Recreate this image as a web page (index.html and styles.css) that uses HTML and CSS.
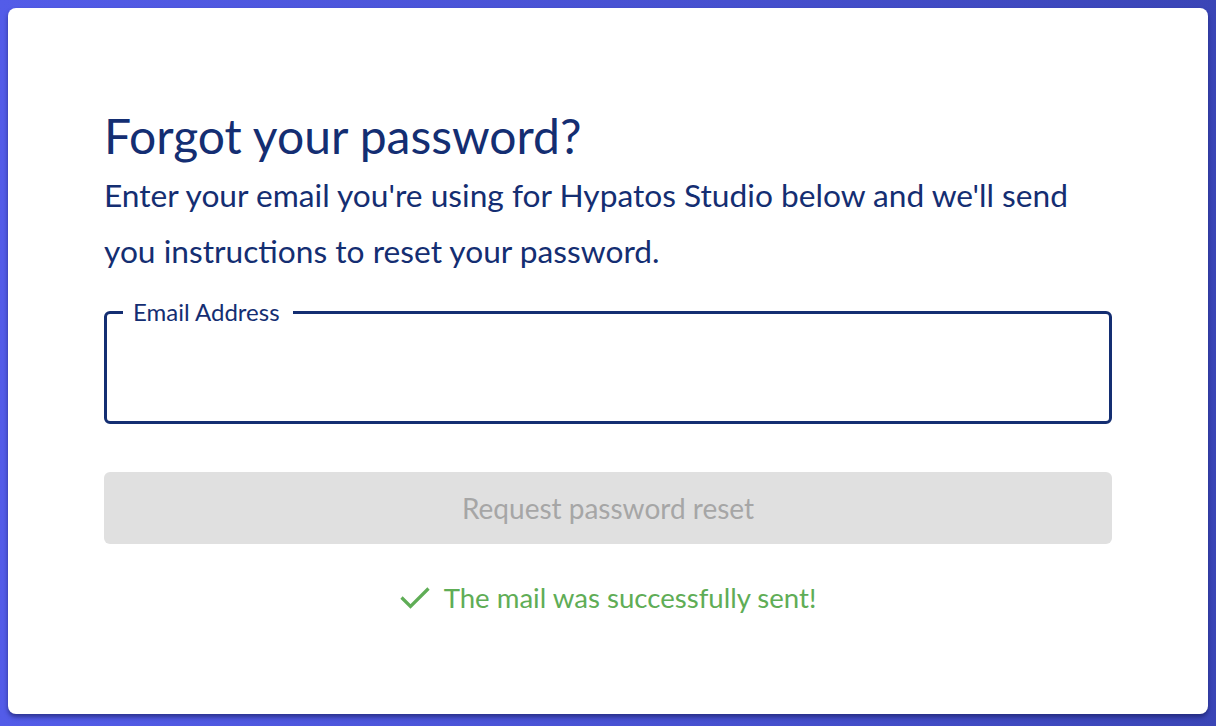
FILE: index.html
```html
<!DOCTYPE html>
<html lang="en">
<head>
<meta charset="utf-8">
<title>Forgot your password?</title>
<link rel="stylesheet" href="styles.css">
</head>
<body>
<main class="card">
  <h1 class="title">Forgot your password?</h1>
  <p class="desc">Enter your email you're using for Hypatos Studio below and we'll send you instructions to reset your password.</p>
  <fieldset class="field">
    <legend class="legend">Email Address</legend>
    <input class="input" type="email" aria-label="Email Address">
  </fieldset>
  <button class="btn" disabled>Request password reset</button>
  <div class="success">
    <svg class="check" width="30" height="22" viewBox="0 0 30 22" aria-hidden="true"><path d="M1.5 10.5 L10.5 19.5 L28.5 1.5" fill="none" stroke="#5fad56" stroke-width="3.2"/></svg>
    <span>The mail was successfully sent!</span>
  </div>
</main>
</body>
</html>
```
FILE: styles.css
```css
* { box-sizing: border-box; }
html, body { height: 100%; }
body {
  margin: 0;
  padding: 8px 8px 12px 8px;
  background: linear-gradient(90deg, #535ce8 0%, #4650cf 60%, #3a45b6 100%);
  font-family: Lato, "Open Sans", sans-serif;
}
.card {
  height: 706px;
  background: #fff;
  border-radius: 8px;
  box-shadow: 0 3px 4px rgba(20, 25, 90, 0.6);
  padding: 97px 96px 0 96px;
  display: flex;
  flex-direction: column;
}
.title {
  margin: 0;
  font-size: 48px;
  font-weight: 400;
  line-height: 62px;
  color: #142e72;
}
.desc {
  margin: 0;
  max-width: 990px;
  font-size: 31.7px;
  line-height: 56px;
  color: #142e72;
}
.field {
  margin: 0;
  margin-top: 21px;
  border: 3px solid #142e72;
  border-radius: 6px;
  padding: 0 24px 0 16px;
  height: 124px;
  min-width: 0;
}
.legend {
  padding: 0 13px 0 10px;
  font-size: 24px;
  line-height: 24px;
  color: #142e72;
}
.input {
  border: 0;
  outline: 0;
  width: 100%;
  height: 80px;
  font: inherit;
  font-size: 24px;
  background: transparent;
}
.btn {
  margin-top: 48px;
  height: 72px;
  border: 0;
  border-radius: 6px;
  background: #e0e0e0;
  color: #a6a6a6;
  font-family: Lato, sans-serif;
  font-size: 28px;
}
.success {
  margin-top: 37px;
  display: flex;
  justify-content: center;
  align-items: center;
  gap: 14px;
  color: #5fad56;
  font-size: 27.6px;
}
.check { display: block; }
```
